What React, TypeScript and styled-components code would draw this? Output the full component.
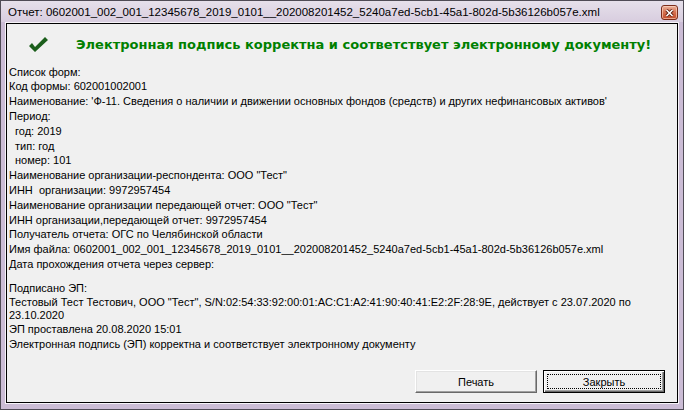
import React from "react";
import styled, { createGlobalStyle } from "styled-components";

const GlobalStyle = createGlobalStyle`
  html, body {
    margin: 0;
    padding: 0;
    background: #cbbcd5;
  }
  * {
    box-sizing: border-box;
  }
`;

const FILE_NAME =
  "0602001_002_001_12345678_2019_0101__202008201452_5240a7ed-5cb1-45a1-802d-5b36126b057e.xml";

const Window = styled.div`
  width: 684px;
  height: 410px;
  display: flex;
  flex-direction: column;
  border: 1px solid #4f4b55;
  background: #cbbcd5;
  font-family: "Liberation Sans", Arial, sans-serif;
`;

const TitleBar = styled.div`
  height: 21px;
  display: flex;
  align-items: center;
  padding: 0 5px 0 7px;
  background: linear-gradient(#e6e0ea, #d8cddf);
`;

const TitleText = styled.div`
  flex: 1;
  font-size: 11.5px;
  color: #000;
  white-space: nowrap;
  overflow: hidden;
`;

const CloseButton = styled.div`
  width: 17px;
  height: 15px;
  margin-top: 2px;
  border: 1px solid #7b2c1a;
  border-radius: 3px;
  background: linear-gradient(#eab19b, #d6704f 50%, #c24b2a);
  display: flex;
  align-items: center;
  justify-content: center;
  box-shadow: inset 0 0 0 1px rgba(255, 220, 200, 0.6);
`;

const ClientFrame = styled.div`
  flex: 1;
  margin: 0 4px 5px 4px;
  border: 1px solid #f6f3f8;
  display: flex;
`;

const Client = styled.div`
  flex: 1;
  border: 1px solid #000;
  background: #f0f0f0;
  display: flex;
  flex-direction: column;
`;

const Header = styled.div`
  height: 24px;
  margin-top: 8px;
  display: flex;
  align-items: center;
  padding-left: 22px;
`;

const CheckIcon = styled.svg`
  width: 20px;
  height: 15px;
  flex: none;
`;

const HeaderText = styled.div`
  margin-left: 27px;
  font-family: "DejaVu Sans", Verdana, sans-serif;
  font-weight: bold;
  font-size: 13px;
  color: #008000;
  white-space: nowrap;
`;

const Body = styled.div`
  flex: 1;
  padding: 8.6px 0 0 2px;
  font-size: 11px;
  color: #000;
`;

const Line = styled.div<{ $indent?: boolean }>`
  height: 14.8px;
  line-height: 14.8px;
  white-space: pre;
  padding-left: ${(p) => (p.$indent ? "6px" : "0")};
`;

const Spacer = styled.div`
  height: 9.3px;
`;

const Wrapped = styled.div`
  line-height: 13px;
`;

const ButtonRow = styled.div`
  display: flex;
  justify-content: flex-end;
  gap: 6px;
  padding: 0 12px 9px 0;
`;

const Button = styled.div<{ $default?: boolean }>`
  position: relative;
  width: 122px;
  height: 23px;
  display: flex;
  align-items: center;
  justify-content: center;
  font-size: 11px;
  color: #000;
  background: #f0f0f0;
  border: 1px solid ${(p) => (p.$default ? "#000" : "#fff")};
  border-right-color: ${(p) => (p.$default ? "#000" : "#696969")};
  border-bottom-color: ${(p) => (p.$default ? "#000" : "#696969")};
  box-shadow: ${(p) =>
    p.$default
      ? "inset 1px 1px 0 #fff, inset -1px -1px 0 #696969, inset -2px -2px 0 #a0a0a0"
      : "inset -1px -1px 0 #a0a0a0, inset 1px 1px 0 #e3e3e3"};
`;

const FocusRing = styled.div`
  position: absolute;
  inset: 3px;
  border: 1px dotted #000;
  pointer-events: none;
`;

const bodyLines: { text: string; indent?: boolean }[] = [
  { text: "Список форм:" },
  { text: "Код формы: 602001002001" },
  {
    text: "Наименование: 'Ф-11. Сведения о наличии и движении основных фондов (средств) и других нефинансовых активов'",
  },
  { text: "Период:" },
  { text: "год: 2019", indent: true },
  { text: "тип: год", indent: true },
  { text: "номер: 101", indent: true },
  { text: 'Наименование организации-респондента: ООО "Тест"' },
  { text: "ИНН  организации: 9972957454" },
  { text: 'Наименование организации передающей отчет: ООО "Тест"' },
  { text: "ИНН организации,передающей отчет: 9972957454" },
  { text: "Получатель отчета: ОГС по Челябинской области" },
  { text: "Имя файла: " + FILE_NAME },
  { text: "Дата прохождения отчета через сервер:" },
];

export default function App() {
  return (
    <>
      <GlobalStyle />
      <Window>
        <TitleBar>
          <TitleText>Отчет: {FILE_NAME}</TitleText>
          <CloseButton>
            <svg width="9" height="8" viewBox="0 0 9 8">
              <path d="M1.5 1 L7.5 7 M7.5 1 L1.5 7" stroke="#5a1c0e" strokeWidth="3.2" />
              <path d="M1.5 1 L7.5 7 M7.5 1 L1.5 7" stroke="#fff" strokeWidth="1.6" />
            </svg>
          </CloseButton>
        </TitleBar>
        <ClientFrame>
          <Client>
            <Header>
              <CheckIcon viewBox="0 0 20 15">
                <polygon points="0,9 3,6 6,10 16,0 19,3 6,15" fill="#1b5e1b" />
              </CheckIcon>
              <HeaderText>Электронная подпись корректна и соответствует электронному документу!</HeaderText>
            </Header>
            <Body>
              {bodyLines.map((l, i) => (
                <Line key={i} $indent={l.indent}>
                  {l.text}
                </Line>
              ))}
              <Spacer />
              <Line>Подписано ЭП:</Line>
              <Wrapped>
                Тестовый Тест Тестович, ООО "Тест", S/N:02:54:33:92:00:01:AC:C1:A2:41:90:40:41:E2:2F:28:9E, действует с 23.07.2020 по
                <br />
                23.10.2020
              </Wrapped>
              <Line>ЭП проставлена 20.08.2020 15:01</Line>
              <Line>Электронная подпись (ЭП) корректна и соответствует электронному документу</Line>
            </Body>
            <ButtonRow>
              <Button>Печать</Button>
              <Button $default>
                <FocusRing />
                Закрыть
              </Button>
            </ButtonRow>
          </Client>
        </ClientFrame>
      </Window>
    </>
  );
}
